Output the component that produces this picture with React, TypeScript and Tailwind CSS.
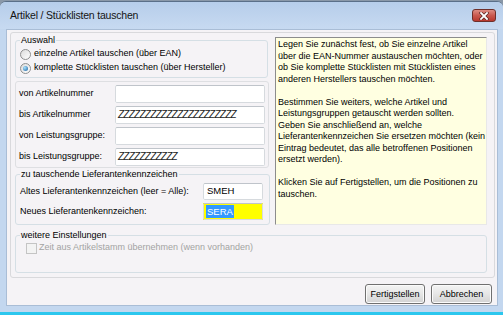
import React from "react";

function Radio({ checked }: { checked?: boolean }) {
  return (
    <span className="inline-flex w-[11px] h-[11px] rounded-full border border-[#8e8f8f] bg-gradient-to-br from-[#dcdcdc] to-[#ffffff] items-center justify-center shrink-0">
      {checked && (
        <span className="w-[5px] h-[5px] rounded-full bg-[radial-gradient(circle_at_35%_35%,#a8e4ff,#1b5e9e)]" />
      )}
    </span>
  );
}

function Input({ children, className = "" }: { children?: React.ReactNode; className?: string }) {
  return (
    <div
      className={
        "h-full flex items-center px-[2px] border border-[#d6dade] border-t-[#bfc4ca] rounded-[2px] overflow-hidden " +
        className
      }
    >
      {children}
    </div>
  );
}

function Hatch({ n }: { n: number }) {
  return (
    <span className="italic text-[10px] leading-none tracking-[-0.75px] text-[#222] whitespace-nowrap">
      {"Z".repeat(n)}
    </span>
  );
}

export default function App() {
  return (
    <div className="w-[503px] h-[315px] bg-[#8a98a8] overflow-hidden flex flex-col font-['Liberation_Sans',Arial,sans-serif] text-[9px] text-black">
      <div className="mt-[1px] w-[503px] h-[311px] bg-[#c3d7ef] border-t border-[#5a6f88] rounded-t-[6px] flex flex-col">
        {/* title bar */}
        <div className="h-[27px] flex items-center justify-between pl-[10px] pr-[7px] rounded-t-[6px] bg-gradient-to-b from-[#b6cdea] to-[#c7daf1]">
          <span className="text-[10.5px] tracking-[-0.2px] text-[#141414]">Artikel / Stücklisten tauschen</span>
          <div className="w-[24px] h-[13px] rounded-[3px] border border-[#6e2f2a] bg-gradient-to-b from-[#dd8b82] via-[#c9584e] to-[#b8372d] flex items-center justify-center">
            <svg width="10" height="8" viewBox="0 0 10 8">
              <path d="M2 1 L8 7 M8 1 L2 7" stroke="#5a2420" strokeWidth="3.2" strokeLinecap="square" />
              <path d="M2 1 L8 7 M8 1 L2 7" stroke="#ffffff" strokeWidth="1.8" strokeLinecap="square" />
            </svg>
          </div>
        </div>
        {/* client */}
        <div className="ml-[6px] mr-[5px] h-[277px] bg-[#f5f3f6] border border-[#a9bdd6] flex flex-col">
          <div className="ml-[3px] mr-[2px] mt-[2px] h-[246px] border border-[#d9d9dc] rounded-[3px] pl-[4px] pt-[2px] flex flex-col">
            <div className="flex gap-x-[6px]">
              {/* left column */}
              <div className="w-[254px] flex flex-col">
                <fieldset className="w-[253px] h-[43px] border border-[#d5dfe5] rounded-[3px] px-[4px]">
                  <legend className="px-[1px] leading-[11px]">Auswahl</legend>
                  <div className="flex items-center h-[14px] mt-[1px]">
                    <Radio />
                    <span className="ml-[3px]">einzelne Artikel tauschen (über EAN)</span>
                  </div>
                  <div className="flex items-center h-[14px]">
                    <Radio checked />
                    <span className="ml-[3px]">komplette Stücklisten tauschen (über Hersteller)</span>
                  </div>
                </fieldset>

                <div className="mt-[3px] h-[87px] border border-[#dedfe2] rounded-[3px] pl-[3px] pr-[2px] pt-[3px] flex flex-col gap-[3px]">
                  <div className="flex items-center h-[18px]">
                    <span className="w-[96px]">von Artikelnummer</span>
                    <div className="w-[150px] h-full bg-white"><Input /></div>
                  </div>
                  <div className="flex items-center h-[18px]">
                    <span className="w-[96px]">bis Artikelnummer</span>
                    <div className="w-[150px] h-full bg-white"><Input><Hatch n={22} /></Input></div>
                  </div>
                  <div className="flex items-center h-[18px]">
                    <span className="w-[96px]">von Leistungsgruppe:</span>
                    <div className="w-[150px] h-full bg-white"><Input /></div>
                  </div>
                  <div className="flex items-center h-[18px]">
                    <span className="w-[96px]">bis Leistungsgruppe:</span>
                    <div className="w-[150px] h-full bg-white"><Input><Hatch n={11} /></Input></div>
                  </div>
                </div>

                <fieldset className="mt-[1px] w-[255px] h-[56px] border border-[#d5dfe5] rounded-[3px] px-[4px]">
                  <legend className="px-[1px] leading-[11px]">zu tauschende Lieferantenkennzeichen</legend>
                  <div className="mt-[3px] flex items-center justify-between h-[17px]">
                    <span>Altes Lieferantenkennzeichen (leer = Alle):</span>
                    <div className="w-[60px] h-full mr-[2px] bg-white">
                      <Input><span className="text-[9.5px] ml-[1px]">SMEH</span></Input>
                    </div>
                  </div>
                  <div className="mt-[3px] flex items-center justify-between h-[17px]">
                    <span>Neues Lieferantenkennzeichen:</span>
                    <div className="w-[60px] h-full mr-[2px] bg-[#ffff00]">
                      <Input>
                        <span className="text-[9.5px] bg-[#3399ff] text-white px-[1px] leading-[13px]">SERA</span>
                      </Input>
                    </div>
                  </div>
                </fieldset>
              </div>

              {/* right column */}
              <div className="w-[212px] mt-[2px] h-[188px] bg-[#ffffe1] border border-t-[#8c8c8c] border-l-[#8c8c8c] border-r-[#e8e8e8] border-b-[#e8e8e8] pl-[2px] pt-[1px] leading-[11.5px] whitespace-nowrap">
                <div>Legen Sie zunächst fest, ob Sie einzelne Artikel</div>
                <div>über die EAN-Nummer austauschen möchten, oder</div>
                <div>ob Sie komplette Stücklisten mit Stücklisten eines</div>
                <div>anderen Herstellers tauschen möchten.</div>
                <div className="h-[11.5px]" />
                <div>Bestimmen Sie weiters, welche Artikel und</div>
                <div>Leistungsgruppen getauscht werden sollten.</div>
                <div>Geben Sie anschließend an, welche</div>
                <div>Lieferantenkennzeichen Sie ersetzen möchten (kein</div>
                <div>Eintrag bedeutet, das alle betroffenen Positionen</div>
                <div>ersetzt werden).</div>
                <div className="h-[11.5px]" />
                <div>Klicken Sie auf Fertigstellen, um die Positionen zu</div>
                <div>tauschen.</div>
              </div>
            </div>

            <fieldset className="mt-[5px] w-[472px] h-[43px] border border-[#d5dfe5] rounded-[3px] px-[4px]">
              <legend className="px-[1px] leading-[11px]">weitere Einstellungen</legend>
              <div className="mt-[1px] ml-[6px] flex items-center h-[12px]">
                <span className="w-[11px] h-[11px] border border-[#c4c4c4] bg-[#f3f3f3] shrink-0" />
                <span className="ml-[2px] text-[#a3a3a3]">Zeit aus Artikelstamm übernehmen (wenn vorhanden)</span>
              </div>
            </fieldset>
          </div>

          <div className="mt-[6px] flex justify-end gap-[6px] pr-[5px]">
            <button className="w-[60px] h-[20px] rounded-[3px] border border-[#707070] bg-gradient-to-b from-[#f4f4f4] via-[#e6e6e6] to-[#d2d2d2] shadow-[inset_0_0_0_1px_#fbfbfb] text-[9px] leading-none">
              Fertigstellen
            </button>
            <button className="w-[61px] h-[20px] rounded-[3px] border border-[#707070] bg-gradient-to-b from-[#f4f4f4] via-[#e6e6e6] to-[#d2d2d2] shadow-[inset_0_0_0_1px_#fbfbfb] text-[9px] leading-none">
              Abbrechen
            </button>
          </div>
        </div>
      </div>
      <div className="h-[3px] bg-[#2cc7ee]" />
    </div>
  );
}
